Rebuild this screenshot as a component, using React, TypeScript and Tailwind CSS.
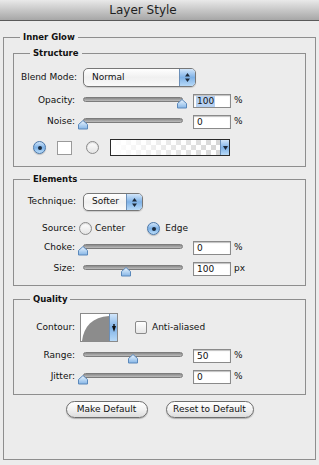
import React from "react";

function Thumb({ left }: { left: number }) {
  return (
    <svg
      className="absolute top-[1px]"
      style={{ left }}
      width="12"
      height="11"
      viewBox="0 0 12 11"
    >
      <defs>
        <linearGradient id="tg" x1="0" y1="0" x2="0" y2="1">
          <stop offset="0" stopColor="#eef5fd" />
          <stop offset="0.5" stopColor="#b8d6f3" />
          <stop offset="1" stopColor="#86b5e6" />
        </linearGradient>
      </defs>
      <path
        d="M1.5 5.5 L6 1.5 L10.5 5.5 V10 H1.5 Z"
        fill="url(#tg)"
        stroke="#5a88bb"
        strokeWidth="1"
        strokeLinejoin="round"
      />
    </svg>
  );
}

function Slider({ frac }: { frac: number }) {
  return (
    <div className="relative h-[12px] w-[100px]">
      <div className="mt-[4px] h-[5px] w-[100px] rounded-full border border-[#7c7c7c] bg-gradient-to-b from-[#8a8a8a] to-[#bdbdbd]" />
      <Thumb left={Math.round(frac * 99) - 6} />
    </div>
  );
}

function NumInput({ value, selected }: { value: string; selected?: boolean }) {
  return (
    <div className="flex h-[14px] w-[38px] items-center border border-[#8a8a8a] bg-white pl-[2px] shadow-[inset_0_1px_1px_rgba(0,0,0,0.25)]">
      <span className={selected ? "bg-[#b6d1f2] px-[1px] leading-[11px]" : "px-[1px] leading-[11px]"}>
        {value}
      </span>
    </div>
  );
}

function SliderRow({
  label,
  frac,
  value,
  unit,
  selected,
  className,
}: {
  label: string;
  frac: number;
  value: string;
  unit: string;
  selected?: boolean;
  className?: string;
}) {
  return (
    <div className={"flex h-[14px] items-center " + (className ?? "")}>
      <div className="w-[61px] text-right">{label}</div>
      <div className="ml-[8px]">
        <Slider frac={frac} />
      </div>
      <div className="ml-[10px]">
        <NumInput value={value} selected={selected} />
      </div>
      <div className="ml-[3px]">{unit}</div>
    </div>
  );
}

function Arrows() {
  return (
    <svg width="7" height="11" viewBox="0 0 7 11">
      <path d="M3.5 1 L6 4.5 H1 Z" fill="#1d2a3a" />
      <path d="M3.5 10 L6 6.5 H1 Z" fill="#1d2a3a" />
    </svg>
  );
}

function Select({ label, width, height }: { label: string; width: number; height: number }) {
  return (
    <div
      className="flex overflow-hidden rounded-[5px] border border-[#777] bg-gradient-to-b from-[#ffffff] via-[#f0f0f0] to-[#fafafa] shadow-[0_1px_1px_rgba(0,0,0,0.15)]"
      style={{ width, height }}
    >
      <div className="flex flex-1 items-center pl-[8px]">{label}</div>
      <div className="flex w-[16px] items-center justify-center border-l border-[#6b8fb8] bg-gradient-to-b from-[#d2e6fa] via-[#7eb1e6] to-[#b7d9f7]">
        <Arrows />
      </div>
    </div>
  );
}

function Radio({ checked }: { checked?: boolean }) {
  if (checked) {
    return (
      <div className="flex h-[13px] w-[13px] items-center justify-center rounded-full border border-[#4a76a8] bg-gradient-to-b from-[#cfe4f9] via-[#7db1e6] to-[#b9dcf8] shadow-[0_1px_1px_rgba(0,0,0,0.2)]">
        <div className="h-[4px] w-[4px] rounded-full bg-[#1c2b3e]" />
      </div>
    );
  }
  return (
    <div className="h-[13px] w-[13px] rounded-full border border-[#8a8a8a] bg-gradient-to-b from-[#ffffff] to-[#e4e4e4] shadow-[inset_0_1px_1px_rgba(0,0,0,0.15)]" />
  );
}

function Legend({ children }: { children: React.ReactNode }) {
  return <legend className="ml-[16px] px-[3px] text-[8.5px] font-bold leading-[12px]">{children}</legend>;
}

function Button({ children, width }: { children: React.ReactNode; width: number }) {
  return (
    <div
      className="flex h-[17px] items-center justify-center rounded-full border border-[#6e6e6e] bg-gradient-to-b from-[#ffffff] via-[#f2f2f2] to-[#dcdcdc] shadow-[0_1px_1px_rgba(0,0,0,0.25)]"
      style={{ width }}
    >
      {children}
    </div>
  );
}

export default function App() {
  return (
    <div className="h-[465px] w-[319px] overflow-hidden bg-[#ececec] font-['DejaVu_Sans',sans-serif] text-[9px] text-[#111]">
      <div className="flex h-[21px] items-center justify-center border-b border-[#5a5a5a] bg-gradient-to-b from-[#e9e9e9] to-[#a7a7a7] pr-[33px] text-[12px] text-[#1e1e1e]">
        Layer Style
      </div>

      <fieldset className="ml-[3px] mt-[10px] w-[313px] border border-[#8e8e8e]">
        <Legend>Inner Glow</Legend>
        <div className="px-[9px] pb-[41px] pt-[4px]">
          {/* Structure */}
          <fieldset className="w-[293px] border border-[#8e8e8e]">
            <Legend>Structure</Legend>
            <div className="pb-[10px] pt-[9px]">
              <div className="flex h-[19px] items-center">
                <div className="w-[63px] text-right">Blend Mode:</div>
                <div className="ml-[6px]">
                  <Select label="Normal" width={113} height={19} />
                </div>
              </div>
              <SliderRow className="mt-[7px]" label="Opacity:" frac={1} value="100" unit="%" selected />
              <SliderRow className="mt-[7px]" label="Noise:" frac={0} value="0" unit="%" />
              <div className="mt-[10px] flex h-[17px] items-center pl-[19px]">
                <Radio checked />
                <div className="ml-[11px] h-[14px] w-[15px] border border-[#9a9a9a] bg-white" />
                <div className="ml-[14px]">
                  <Radio />
                </div>
                <div className="ml-[11px] flex h-[17px] w-[120px] border border-[#2a2a2a]">
                  <div className="relative flex-1 bg-[conic-gradient(#d6d6d6_25%,#ffffff_0_50%,#d6d6d6_0_75%,#ffffff_0)] bg-[length:10px_10px]">
                    <div className="h-full w-full bg-gradient-to-r from-[#ffffff] via-[rgba(255,255,255,0.5)] to-[rgba(255,255,255,0)]" />
                  </div>
                  <div className="flex w-[9px] items-center justify-center border-l border-[#6b8fb8] bg-gradient-to-b from-[#d2e6fa] via-[#7eb1e6] to-[#b7d9f7]">
                    <svg width="5" height="4" viewBox="0 0 5 4">
                      <path d="M0 0 H5 L2.5 4 Z" fill="#1d2a3a" />
                    </svg>
                  </div>
                </div>
              </div>
            </div>
          </fieldset>

          {/* Elements */}
          <fieldset className="mt-[6px] w-[293px] border border-[#8e8e8e]">
            <Legend>Elements</Legend>
            <div className="pb-[9px] pt-[8px]">
              <div className="flex h-[18px] items-center">
                <div className="w-[62px] text-right">Technique:</div>
                <div className="ml-[7px]">
                  <Select label="Softer" width={60} height={18} />
                </div>
              </div>
              <div className="mt-[11px] flex h-[13px] items-center">
                <div className="w-[62px] text-right">Source:</div>
                <div className="ml-[3px]">
                  <Radio />
                </div>
                <div className="ml-[3px]">Center</div>
                <div className="ml-[22px]">
                  <Radio checked />
                </div>
                <div className="ml-[5px]">Edge</div>
              </div>
              <SliderRow className="mt-[6px]" label="Choke:" frac={0} value="0" unit="%" />
              <SliderRow className="mt-[7px]" label="Size:" frac={0.43} value="100" unit="px" />
            </div>
          </fieldset>

          {/* Quality */}
          <fieldset className="mt-[7px] w-[293px] border border-[#8e8e8e]">
            <Legend>Quality</Legend>
            <div className="pb-[10px] pt-[8px]">
              <div className="flex h-[29px] items-center">
                <div className="w-[61px] text-right">Contour:</div>
                <div className="ml-[5px] flex h-[29px] w-[38px] border border-[#8a8a8a] bg-white">
                  <svg className="flex-1" viewBox="0 0 29 27" preserveAspectRatio="none">
                    <path d="M1 27 C 3 12, 12 3, 29 2 L29 27 Z" fill="#8c8c8c" />
                  </svg>
                  <div className="flex w-[8px] items-center justify-center border-l border-[#6b8fb8] bg-gradient-to-b from-[#d2e6fa] via-[#7eb1e6] to-[#b7d9f7]">
                    <svg width="4" height="8" viewBox="0 0 4 8">
                      <path d="M0 2 H4 L2 8 Z" fill="#111" />
                      <rect x="1.3" y="0" width="1.4" height="3" fill="#111" />
                    </svg>
                  </div>
                </div>
                <div className="ml-[17px] h-[13px] w-[12px] rounded-[2px] border border-[#8a8a8a] bg-gradient-to-b from-[#ffffff] to-[#e6e6e6]" />
                <div className="ml-[5px]">Anti-aliased</div>
              </div>
              <SliderRow className="mt-[7px]" label="Range:" frac={0.5} value="50" unit="%" />
              <SliderRow className="mt-[7px]" label="Jitter:" frac={0} value="0" unit="%" />
            </div>
          </fieldset>

          <div className="mt-[6px] flex justify-center gap-[18px]">
            <Button width={82}>Make Default</Button>
            <Button width={88}>Reset to Default</Button>
          </div>
        </div>
      </fieldset>
    </div>
  );
}
